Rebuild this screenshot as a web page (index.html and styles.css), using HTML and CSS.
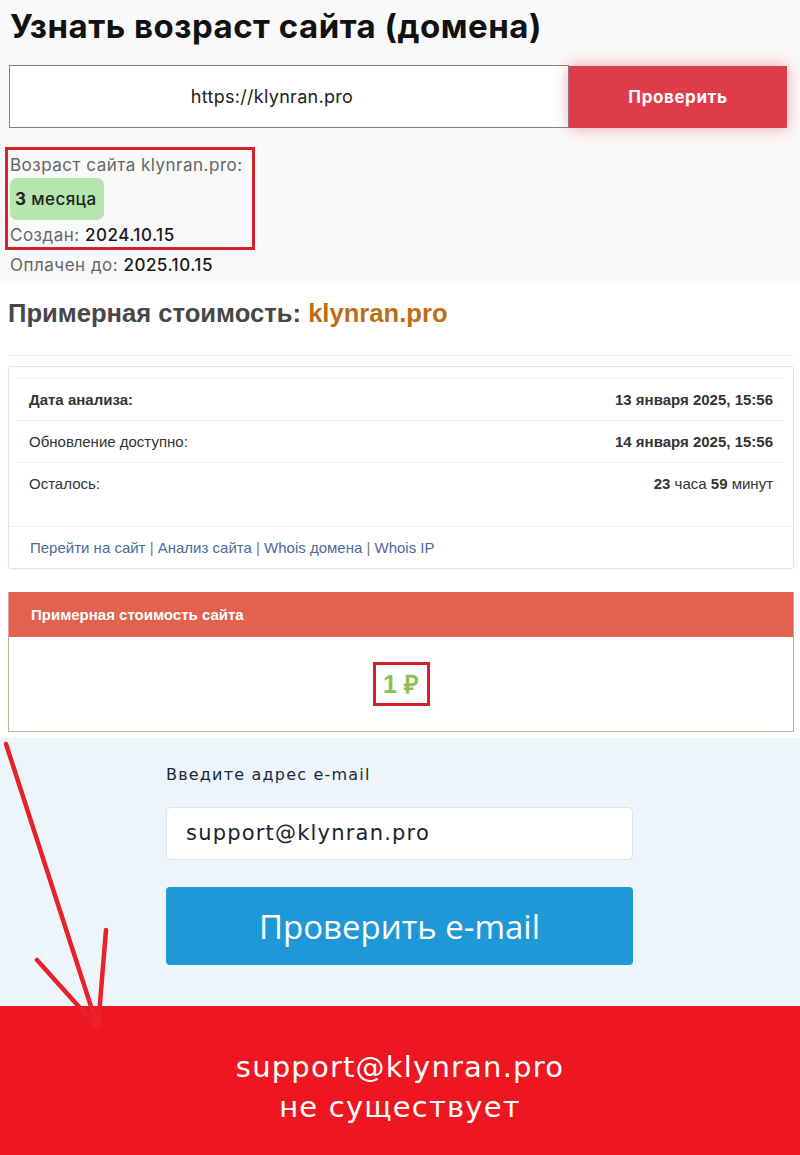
FILE: index.html
```html
<!DOCTYPE html>
<html lang="ru">
<head>
    <meta charset="UTF-8">
    <meta name="viewport" content="width=device-width, initial-scale=1.0">
    <title>Узнать возраст сайта</title>
<link rel="stylesheet" href="styles.css">
</head>

<body>
    <div class="age-section">
        <h1 class="age-title">Узнать возраст сайта (домена)</h1>
        <form class="check-form">
            <div class="check-input">https://klynran.pro</div>
            <button type="button" class="check-btn">Проверить</button>
        </form>
        <div class="age-result">
            <div class="age-line">Возраст сайта klynran.pro:</div>
            <div class="age-badge"><b>3</b> месяца</div>
            <div class="age-line">Создан: <span class="age-value">2024.10.15</span></div>
        </div>
        <div class="age-line paid">Оплачен до: <span class="age-value">2025.10.15</span></div>
    </div>

    <div class="cost-section">
        <h2 class="cost-title">Примерная стоимость: <span class="cost-domain">klynran.pro</span></h2>

        <div class="info-box">
            <table class="info-table">
                <tr>
                    <td><b>Дата анализа:</b></td>
                    <td class="right"><b>13 января 2025, 15:56</b></td>
                </tr>
                <tr>
                    <td>Обновление доступно:</td>
                    <td class="right"><b>14 января 2025, 15:56</b></td>
                </tr>
                <tr>
                    <td>Осталось:</td>
                    <td class="right"><b>23</b> часа <b>59</b> минут</td>
                </tr>
            </table>
            <div class="info-links">
                <a href="#">Перейти на сайт</a> | <a href="#">Анализ сайта</a> | <a href="#">Whois домена</a> | <a href="#">Whois IP</a>
            </div>
        </div>

        <div class="price-card">
            <div class="price-head">Примерная стоимость сайта</div>
            <div class="price-body">
                <span class="price-value">1 ₽</span>
            </div>
        </div>
    </div>

    <div class="email-section">
        <div class="email-form">
            <div class="email-label">Введите адрес e-mail</div>
            <div class="email-input">support@klynran.pro</div>
            <button type="button" class="email-btn">Проверить e-mail</button>
        </div>
    </div>

    <div class="email-result">
        support@klynran.pro<br>
        не существует
    </div>

    <!-- annotation arrow drawn over the screenshot -->
    <svg class="arrow" width="800" height="1155" viewBox="0 0 800 1155">
        <path d="M6 744 L98 1028 M37 960 L98 1028 M106 930 L98 1028" fill="none" stroke="#e8212b" stroke-width="4.5" stroke-linecap="round"/>
    </svg>
</body>
</html>
```

FILE: styles.css
```css
body {
    margin: 0;
    font-family: "Liberation Sans", Arial, sans-serif;
    background: #fff;
    position: relative;
}
.age-section {
    background-color: #f9f9f9;
    height: 283px;
    font-family: Inter, "Open Sans", sans-serif;
}
.age-title {
    margin: 0;
    padding: 6px 0 0 10px;
    font-size: 33px;
    line-height: 40px;
    letter-spacing: 0.5px;
    font-weight: 700;
    color: #111;
}
.check-form {
    display: flex;
    margin: 19px 0 0 9px;
}
.check-input {
    width: 524px;
    height: 61px;
    padding-right: 34px;
    border: 1px solid #808080;
    background: #fff;
    display: flex;
    align-items: center;
    justify-content: center;
    font-size: 18px;
    letter-spacing: 0.3px;
    color: #222;
}
.check-btn {
    width: 218px;
    height: 62px;
    margin-top: 1px;
    border: none;
    background-color: #df3c4b;
    color: #fff;
    font-family: Inter, sans-serif;
    font-weight: 700;
    font-size: 17px;
    letter-spacing: 0.6px;
    box-shadow: 0 0 14px rgba(223, 60, 75, 0.45);
}
.age-result {
    display: inline-block;
    margin: 19px 0 0 5px;
    padding: 3px 0 0 2px;
    width: 242px;
    height: 94px;
    border: 3px solid #d8202a;
}
.age-line {
    font-size: 17px;
    line-height: 24px;
    letter-spacing: 0.5px;
    white-space: nowrap;
    color: #666;
}
.age-value {
    color: #1a1a1a;
    font-weight: 500;
}
.paid {
    padding-left: 10px;
    margin-top: 3px;
}
.age-badge {
    width: fit-content;
    height: 42px;
    line-height: 42px;
    margin: 1px 0 3px;
    padding: 0 7px 0 5px;
    background-color: #b4e6ad;
    border-radius: 7px;
    font-size: 17px;
    letter-spacing: 0.4px;
    font-weight: 500;
    color: #222;
}
.cost-section {
    padding: 0 6px 6px 8px;
}
.cost-title {
    margin: 0;
    padding: 16px 0 28px 0;
    font-size: 25.6px;
    line-height: 28px;
    color: #474747;
    border-bottom: 1px solid #f1f1f1;
}
.cost-domain {
    color: #bd6d14;
}
.info-box {
    margin-top: 10px;
    border: 1px solid #e4e4e4;
    border-radius: 3px;
    box-shadow: 0 1px 2px rgba(0, 0, 0, 0.04);
    padding-top: 11px;
}
.info-table {
    width: calc(100% - 20px);
    margin: 0 10px 22px 9px;
    border-collapse: collapse;
    font-size: 15px;
    color: #333;
}
.info-table td {
    border-top: 1px solid #eee;
    height: 41px;
    padding: 0 9px 0 11px;
}
.info-table .right {
    text-align: right;
}
.info-links {
    border-top: 1px solid #eee;
    height: 41px;
    line-height: 41px;
    padding-left: 21px;
    font-size: 15px;
    color: #777;
}
.info-links a {
    color: #4a6b9b;
    text-decoration: none;
}
.price-card {
    margin-top: 23px;
    border: 1px solid #dca59d;
    border-top: none;
}
.price-head {
    background-color: #e2614f;
    color: #fff;
    font-weight: 700;
    font-size: 15px;
    height: 45px;
    line-height: 45px;
    padding-left: 22px;
}
.price-body {
    height: 94px;
    display: flex;
    justify-content: center;
    align-items: center;
}
.price-value {
    display: inline-block;
    width: 51px;
    height: 38px;
    line-height: 38px;
    text-align: center;
    border: 3px solid #d8202a;
    color: #8cc152;
    font-weight: 700;
    font-size: 25px;
}
.email-section {
    background-color: #eef5fa;
    padding: 25px 0 41px 166px;
    font-family: "DejaVu Sans", sans-serif;
}
.email-form {
    width: 467px;
}
.email-label {
    font-size: 16px;
    line-height: 24px;
    letter-spacing: 1.2px;
    color: #1b2a3a;
}
.email-input {
    margin-top: 20px;
    height: 51px;
    line-height: 51px;
    padding-left: 19px;
    background: #fff;
    border: 1px solid #dde3e9;
    border-radius: 5px;
    font-size: 21px;
    letter-spacing: 1.2px;
    color: #1b2233;
}
.email-btn {
    display: block;
    margin-top: 27px;
    width: 467px;
    height: 78px;
    border: none;
    border-radius: 4px;
    background-color: #1e98d6;
    color: #fff;
    font-family: "Open Sans", sans-serif;
    font-size: 33px;
}
.email-result {
    background-color: #ee1620;
    height: 108px;
    padding-top: 41px;
    text-align: center;
    color: #fff;
    font-family: "DejaVu Sans", sans-serif;
    font-size: 29px;
    line-height: 40px;
    letter-spacing: 1.2px;
}
.arrow {
    position: absolute;
    top: 0;
    left: 0;
    pointer-events: none;
}
```
